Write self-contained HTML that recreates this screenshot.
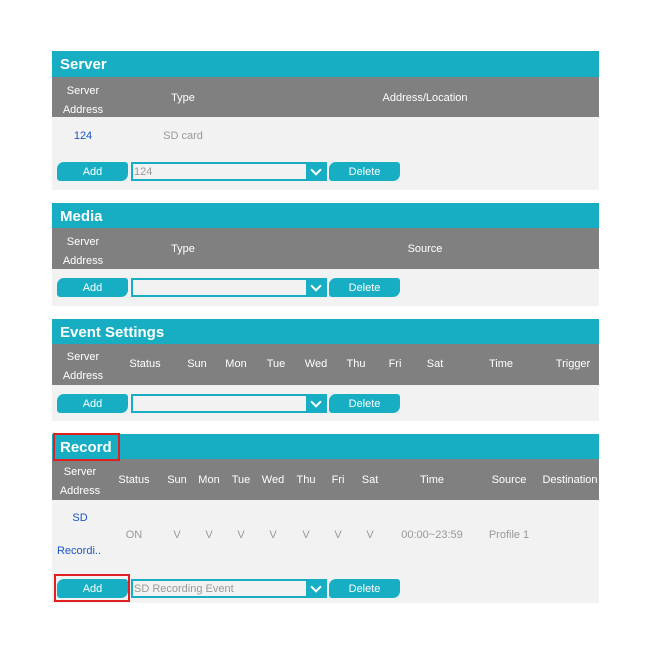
<!DOCTYPE html><html><head><style>
body{margin:0;width:650px;height:655px;background:#fff;font-family:"Liberation Sans",sans-serif;position:relative;overflow:hidden}
.a{position:absolute}
.t{background:#17aec4;color:#fff;font-weight:bold;font-size:15px;left:52px;width:547px;height:26px;line-height:28px;text-indent:8px}
.h{background:#808080;color:#fff;font-size:11px;left:52px;width:547px}
.b{background:#f2f2f2;left:52px;width:547px}
.c{position:absolute;text-align:center;transform:translateX(-50%);white-space:nowrap}
.btn{position:absolute;background:#17aec4;color:#fff;font-size:11px;text-align:center;height:19px;line-height:21px;width:71px;border-radius:7px 3px 7px 3px}
.sel{position:absolute;left:131px;width:191px;height:15px;border:2px solid #17aec4;background:#f2f2f2;color:#999;font-size:11px;line-height:17px;padding-left:1px}
.sel:after{content:"";position:absolute;right:0;top:0;width:19px;height:15px;background:#17aec4}
.sel i{position:absolute;right:5px;top:2px;width:6px;height:6px;border-right:2px solid #fff;border-bottom:2px solid #fff;transform:rotate(45deg);z-index:2}
.g{color:#999;font-size:11px}.bl{color:#1a55c8;font-size:11px}
.red{position:absolute;border:2px solid #e02020}
</style></head><body>
<div class="a t" style="top:51px">Server</div>
<div class="a h" style="top:77px;height:40px"><div class="c" style="left:31px;top:5px;line-height:19px">Server<br>Address</div><div class="c" style="left:131px;top:15px">Type</div><div class="c" style="left:373px;top:15px">Address/Location</div></div>
<div class="a b" style="top:117px;height:73px"><div class="c bl" style="left:31px;top:13px">124</div><div class="c g" style="left:131px;top:13px">SD card</div></div>
<div class="btn" style="left:57px;top:162px">Add</div><div class="sel" style="top:162px">124<i></i></div><div class="btn" style="left:329px;top:162px">Delete</div>

<div class="a t" style="top:203px">Media</div>
<div class="a h" style="top:228px;height:41px"><div class="c" style="left:31px;top:5px;line-height:19px">Server<br>Address</div><div class="c" style="left:131px;top:15px">Type</div><div class="c" style="left:373px;top:15px">Source</div></div>
<div class="a b" style="top:269px;height:37px"></div>
<div class="btn" style="left:57px;top:278px">Add</div><div class="sel" style="top:278px"><i></i></div><div class="btn" style="left:329px;top:278px">Delete</div>

<div class="a t" style="top:319px">Event Settings</div>
<div class="a h" style="top:344px;height:41px"><div class="c" style="left:31px;top:4px;line-height:19px">Server<br>Address</div>
<div class="c" style="left:93px;top:14px">Status</div><div class="c" style="left:145px;top:14px">Sun</div><div class="c" style="left:184px;top:14px">Mon</div><div class="c" style="left:224px;top:14px">Tue</div><div class="c" style="left:264px;top:14px">Wed</div><div class="c" style="left:304px;top:14px">Thu</div><div class="c" style="left:343px;top:14px">Fri</div><div class="c" style="left:383px;top:14px">Sat</div><div class="c" style="left:449px;top:14px">Time</div><div class="c" style="left:521px;top:14px">Trigger</div></div>
<div class="a b" style="top:385px;height:36px"></div>
<div class="btn" style="left:57px;top:394px">Add</div><div class="sel" style="top:394px"><i></i></div><div class="btn" style="left:329px;top:394px">Delete</div>

<div class="a t" style="top:434px">Record</div>
<div class="a h" style="top:459px;height:41px"><div class="c" style="left:28px;top:4px;line-height:19px">Server<br>Address</div>
<div class="c" style="left:82px;top:15px">Status</div><div class="c" style="left:125px;top:15px">Sun</div><div class="c" style="left:157px;top:15px">Mon</div><div class="c" style="left:189px;top:15px">Tue</div><div class="c" style="left:221px;top:15px">Wed</div><div class="c" style="left:254px;top:15px">Thu</div><div class="c" style="left:286px;top:15px">Fri</div><div class="c" style="left:318px;top:15px">Sat</div><div class="c" style="left:380px;top:15px">Time</div><div class="c" style="left:457px;top:15px">Source</div><div class="c" style="left:518px;top:15px">Destination</div></div>
<div class="a b" style="top:500px;height:103px">
<div class="c bl" style="left:28px;top:12px">SD</div><div class="c bl" style="left:27px;top:45px">Recordi..</div>
<div class="c g" style="left:82px;top:29px">ON</div><div class="c g" style="left:125px;top:29px">V</div><div class="c g" style="left:157px;top:29px">V</div><div class="c g" style="left:189px;top:29px">V</div><div class="c g" style="left:221px;top:29px">V</div><div class="c g" style="left:254px;top:29px">V</div><div class="c g" style="left:286px;top:29px">V</div><div class="c g" style="left:318px;top:29px">V</div><div class="c g" style="left:380px;top:29px">00:00~23:59</div><div class="c g" style="left:457px;top:29px">Profile 1</div></div>
<div class="btn" style="left:57px;top:579px">Add</div><div class="sel" style="top:579px">SD Recording Event<i></i></div><div class="btn" style="left:329px;top:579px">Delete</div>
<div class="red" style="left:53px;top:433px;width:63px;height:24px"></div>
<div class="red" style="left:54px;top:574px;width:72px;height:24px"></div>
</body></html>
